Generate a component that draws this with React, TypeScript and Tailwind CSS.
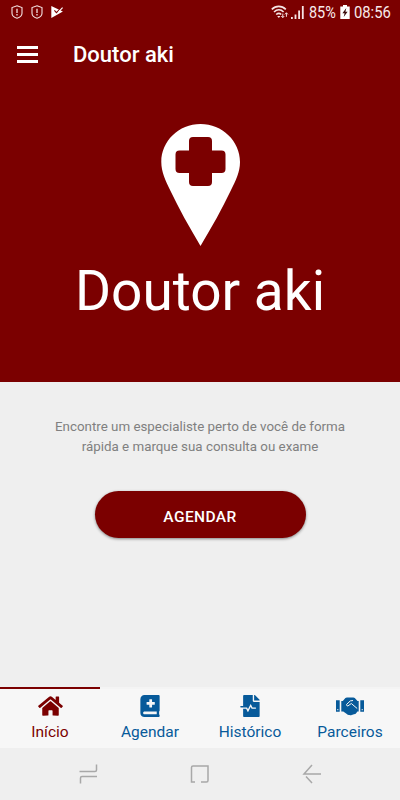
import type { ReactNode } from "react";
import { FaBookMedical, FaFileMedicalAlt, FaHome } from "react-icons/fa";

function ShieldIcon() {
  return (
    <svg className="h-[14px] w-3" viewBox="0 0 12 14" fill="none" stroke="#f5e4e4">
      <path d="M6 .8 11 2.6v5.6c0 2.2-2.4 4.2-5 5-2.6-.8-5-2.8-5-5V2.6z" strokeWidth="1.1" />
      <path d="M6 3.8v4.1M6 9v1.4" strokeWidth="1.3" />
    </svg>
  );
}

function PlayCheckIcon() {
  return (
    <svg className="h-3 w-3" viewBox="0 0 12 12">
      <path d="M.3 0 11.9 5.6.3 12z" fill="#fff" />
      <path d="m3.4 4.4 2 2.2 4-4" fill="none" stroke="#7b0000" strokeWidth="1.1" />
      <path d="m7.6 5.8 4-4.2" fill="none" stroke="#fff" strokeWidth="1.2" />
    </svg>
  );
}

function WifiIcon() {
  return (
    <svg className="h-[14px] w-[18px]" viewBox="0 0 18 14" fill="none" stroke="#f5e4e4">
      <path d="M.8 4.4c4-4 10-4 14 0M3 7c3-2.8 6.8-2.8 9.6 0M5.2 9.5c1.8-1.5 3.6-1.5 5 0" strokeWidth="1.6" />
      <path d="M6.2 11h3.2l-1.6 2z" fill="#f5e4e4" stroke="none" />
      <path d="M11.8 8.6v4M10.3 11l1.5 1.6 1.5-1.6M15.4 11.8v-4M13.9 9.4l1.5-1.6 1.5 1.6" strokeWidth="1" />
    </svg>
  );
}

function SignalIcon() {
  return (
    <svg className="h-[13px] w-[13px]" viewBox="0 0 13 13" fill="#f5e4e4">
      <path d="M0 11h1.8v2H0zM3.6 8.5h1.8V13H3.6zM7.2 4.5H9V13H7.2zM10.9 0h1.8v13h-1.8z" />
    </svg>
  );
}

function BatteryIcon() {
  return (
    <svg className="h-[14px] w-[10px]" viewBox="0 0 10 14">
      <path d="M3 0h4v1.5h2.7V14H.3V1.5H3z" fill="#fff" />
      <path d="M6.3 3 2.4 8.2h2.2L3.7 12l3.9-5.2H5.4z" fill="#3b0a0a" />
    </svg>
  );
}

function HandshakeIcon() {
  return (
    <svg className="h-[22px] w-7" viewBox="0 0 28 22" fill="currentColor">
      <path d="M0 5.3h3.7v11.4H0zM24.3 5.3H28v11.4h-3.7z" />
      <path d="M5.3 5.9h1.5l2.6-2.8q.6-.6 1.5-.6h6.500q.8 0 1.400.6L21.500 5.900h1.200v10.600h-1.300l-1.500 2q-.8.900-1.800.6-.9 1-2.100.6-1.200 1-2.500.3-1.600.3-2.700-.9l-3.500-2.600h-2z" />
      <path
        d="m17 5.500-2.700.4-3.700 3.500q-.3 1.500 1.300 1.600l3.400-2.500 5.900 5"
        fill="none"
        stroke="#f7f7f7"
        strokeWidth="1"
        strokeLinejoin="round"
      />
      <path d="M1.3 14h1v1.2h-1zM25.7 14h1v1.2h-1z" fill="#f7f7f7" />
    </svg>
  );
}

function StatusBar() {
  return (
    <div className="flex h-6 items-center justify-between pr-[9px] pl-[11px] text-[#f8eaea]">
      <div className="flex items-center gap-2">
        <ShieldIcon />
        <ShieldIcon />
        <PlayCheckIcon />
      </div>
      <div className="flex items-center">
        <WifiIcon />
        <span className="ml-[2px]">
          <SignalIcon />
        </span>
        <span className="ml-[5px] w-[27px] text-[17px] leading-6">
          <span className="inline-block origin-left scale-x-[0.85]">85%</span>
        </span>
        <span className="ml-1">
          <BatteryIcon />
        </span>
        <span className="ml-1 w-[37px] text-[17px] leading-6">
          <span className="inline-block origin-left scale-x-[0.87]">08:56</span>
        </span>
      </div>
    </div>
  );
}

function PinLogo() {
  return (
    <svg className="h-[122px] w-20" viewBox="0 0 80 122">
      <path
        d="M40.5 0C18.8 0 1.3 17 1.3 38c0 10 4.2 18.6 9 28.5C18.8 84.5 29.3 103 40.5 122 51.8 103 62.3 84.5 70.8 66.5 75.8 56.6 80 48 80 38 80 17 62.3 0 40.5 0Z"
        fill="#fff"
      />
      <path
        d="M33 13h15a4 4 0 0 1 4 4v9.5h9.5a4 4 0 0 1 4 4v14.5a4 4 0 0 1-4 4H52v9a4 4 0 0 1-4 4H33a4 4 0 0 1-4-4v-9h-9.5a4 4 0 0 1-4-4V30.5a4 4 0 0 1 4-4H29V17a4 4 0 0 1 4-4z"
        fill="#7b0000"
      />
    </svg>
  );
}

type TabProps = {
  label: string;
  icon: ReactNode;
  active?: boolean;
};

function Tab({ label, icon, active }: TabProps) {
  return (
    <button
      className={`flex flex-1 flex-col items-center border-t-2 pt-[6px] ${
        active
          ? "border-[#7b0000] text-[#7b0000]"
          : "border-[#f4f4f4] text-[#075a9a]"
      }`}
    >
      {icon}
      <span className="mt-[5px] text-[15.5px] leading-5">{label}</span>
    </button>
  );
}

export default function App() {
  return (
    <div className="flex h-[800px] w-[400px] flex-col overflow-hidden bg-[#efefef] font-['Roboto',sans-serif]">
      <div className="flex h-[382px] flex-col bg-[#7b0000]">
        <StatusBar />
        <header className="flex h-[61px] items-center pl-[17px] text-white">
          <button className="flex w-[21px] flex-col gap-1" aria-label="Menu">
            <span className="h-[3px] bg-white" />
            <span className="h-[3px] bg-white" />
            <span className="h-[3px] bg-white" />
          </button>
          <h1 className="ml-[35px] text-[22px] font-medium">Doutor aki</h1>
        </header>
        <div className="flex flex-col items-center pt-[39px] text-white">
          <PinLogo />
          <div className="mt-[13px] text-[55px] leading-[64px] whitespace-nowrap">
            Doutor aki
          </div>
        </div>
      </div>

      <main className="flex flex-1 flex-col items-center pt-[35px]">
        <p className="text-center text-[13.35px] leading-5 whitespace-nowrap text-[#808080]">
          Encontre um especialiste perto de você de forma
          <br />
          rápida e marque sua consulta ou exame
        </p>
        <button className="mt-[34px] h-[47px] w-[211px] rounded-full bg-[#7b0000] pt-[6px] text-[15.5px] font-medium tracking-[0.4px] text-white shadow-[0_1px_3px_rgba(0,0,0,0.45)]">
          AGENDAR
        </button>
      </main>

      <nav className="flex h-[61px] bg-[#f7f7f7]">
        <Tab label="Início" icon={<FaHome className="h-[22px] w-[25px]" />} active />
        <Tab label="Agendar" icon={<FaBookMedical className="h-[22px] w-[20px]" />} />
        <Tab label="Histórico" icon={<FaFileMedicalAlt className="h-[22px] w-[20px]" />} />
        <Tab label="Parceiros" icon={<HandshakeIcon />} />
      </nav>

      <div className="flex h-[52px] items-center justify-between px-[78px]">
        <svg className="h-5 w-5" viewBox="0 0 20 20" fill="none" stroke="#a8a8a8" strokeWidth="1.5">
          <path d="M1.5 7.5H17q1.5 0 1.5-1.5V.5M2.5 19.5V14q0-1.5 1.5-1.5H19" />
        </svg>
        <svg className="h-5 w-5" viewBox="0 0 20 20" fill="none" stroke="#a8a8a8" strokeWidth="1.5">
          <path d="M5 18H1.5V3.5Q1.5 2 3 2h15v14.5q0 1.5-1.5 1.5H11" />
        </svg>
        <svg className="h-5 w-5" viewBox="0 0 20 20" fill="none" stroke="#a8a8a8" strokeWidth="1.5">
          <path d="M19 10H2l8-9M4 12.5l6 6.5" />
        </svg>
      </div>
    </div>
  );
}
